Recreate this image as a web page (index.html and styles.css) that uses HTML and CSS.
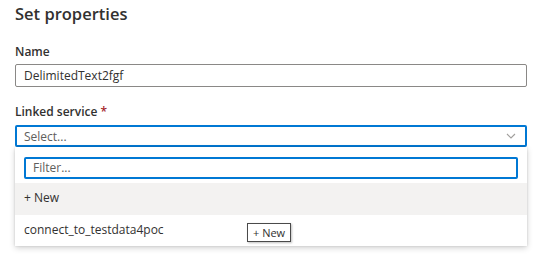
FILE: index.html
```html
<!DOCTYPE html>
<html>
<head>
    <title>Set properties</title>
    <link rel="stylesheet" href="styles.css">
</head>
<body>
    <div class="panel">
        <h1>Set properties</h1>

        <!-- Name field -->
        <div class="field">
            <label class="label">Name</label>
            <div class="text-input">DelimitedText2fgf</div>
        </div>

        <!-- Linked service dropdown -->
        <div class="field linked">
            <label class="label">Linked service <span class="required">*</span></label>
            <div class="select">
                <span class="placeholder">Select...</span>
                <svg class="chevron" width="10" height="6" viewBox="0 0 10 6">
                    <path d="M1 1 L5 5 L9 1" fill="none" stroke="#a19f9d" stroke-width="1.1"/>
                </svg>
            </div>
            <div class="callout">
                <div class="filter">Filter...</div>
                <div class="option hovered">+ New</div>
                <div class="option">connect_to_testdata4poc</div>
            </div>
            <div class="tooltip">+ New</div>
        </div>
    </div>
</body>
</html>
```

FILE: styles.css
```css
* {
    margin: 0;
    padding: 0;
    box-sizing: border-box;
}
body {
    font-family: 'Open Sans', 'Noto Sans', sans-serif;
    background: #ffffff;
    color: #323130;
    width: 543px;
    height: 262px;
    overflow: hidden;
}
.panel {
    width: 527px;
    padding: 3px 0 0 15px;
}
h1 {
    font-size: 16.5px;
    font-weight: 600;
    line-height: 22px;
    margin-bottom: 18px;
}
.field {
    display: flex;
    flex-direction: column;
}
.label {
    font-size: 12px;
    font-weight: 600;
    line-height: 18px;
    margin-bottom: 3px;
}
.required {
    color: #a4262c;
}
.text-input {
    height: 23px;
    border: 1px solid #8a8886;
    border-radius: 2px;
    padding: 0 8px;
    font-size: 12px;
    line-height: 21px;
}
.linked {
    position: relative;
    margin-top: 16px;
}
.linked .label {
    margin-bottom: 4px;
}
.select {
    height: 22px;
    border: 2px solid #0078d4;
    border-radius: 2px;
    padding: 0 7px;
    display: flex;
    align-items: center;
    justify-content: space-between;
    font-size: 12px;
}
.placeholder {
    color: #605e5c;
}
.chevron {
    margin-right: 2px;
}
.callout {
    background: #ffffff;
    box-shadow: 0 2px 6px rgba(0, 0, 0, 0.18), 0 0 2px rgba(0, 0, 0, 0.12);
    padding-top: 10px;
    font-size: 12px;
}
.filter {
    height: 22px;
    margin: 0 9px 4px 9px;
    border: 2px solid #0078d4;
    border-radius: 2px;
    padding: 0 7px;
    line-height: 18px;
    color: #605e5c;
}
.option {
    height: 32px;
    line-height: 30px;
    padding: 0 9px;
}
.option.hovered {
    background: #f3f2f1;
}
.option:last-child {
    height: 31px;
}
.tooltip {
    position: absolute;
    left: 232px;
    top: 120px;
    height: 19px;
    padding: 0 5px;
    background: #ffffff;
    border: 1px solid #4a4a4a;
    box-shadow: 1px 1px 2px rgba(0, 0, 0, 0.25);
    font-size: 11px;
    line-height: 17px;
}
```
